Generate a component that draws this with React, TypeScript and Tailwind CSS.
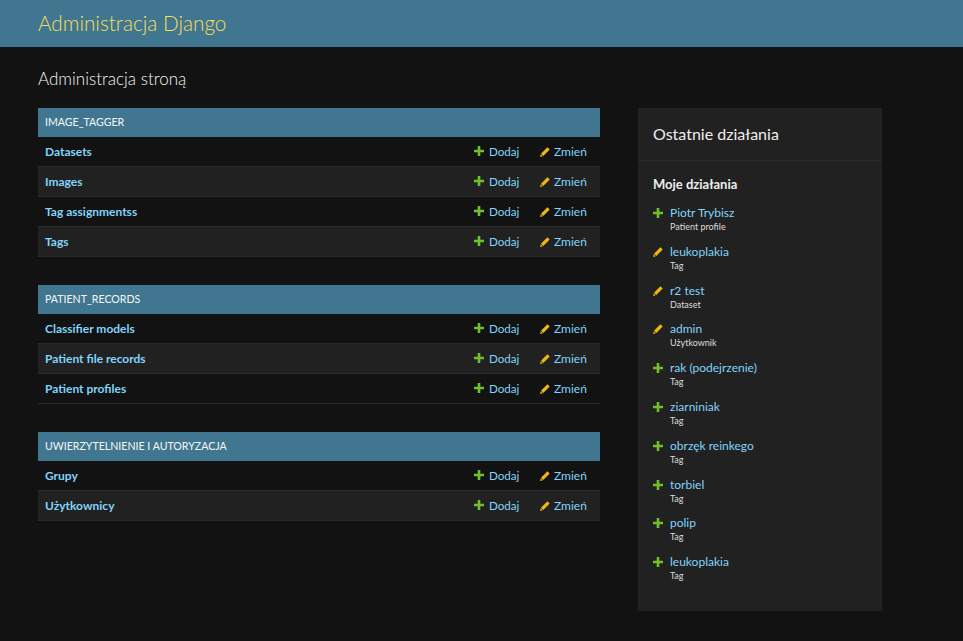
import React from "react";

const font = { fontFamily: '"Segoe UI", Lato, "Noto Sans", sans-serif' };

function Plus({ className = "" }: { className?: string }) {
  return (
    <svg viewBox="0 0 10 10" className={className} width="10" height="10">
      <path d="M3.7 0h2.6v3.7H10v2.6H6.3V10H3.7V6.3H0V3.7h3.7z" fill="#70bf2b" />
    </svg>
  );
}

function Pencil({ className = "" }: { className?: string }) {
  return (
    <svg viewBox="0 0 10 10" className={className} width="10" height="10">
      <path d="M7.4 0.3L9.7 2.6L3.3 9L1 6.7Z" fill="#efb80b" />
      <path d="M0.7 7.2L2.8 9.3L0.1 9.9Z" fill="#efb80b" />
    </svg>
  );
}

type Module = { title: string; rows: string[] };

const modules: Module[] = [
  { title: "Image_tagger", rows: ["Datasets", "Images", "Tag assignmentss", "Tags"] },
  { title: "Patient_records", rows: ["Classifier models", "Patient file records", "Patient profiles"] },
  { title: "Uwierzytelnienie i autoryzacja", rows: ["Grupy", "Użytkownicy"] },
];

const actions: { kind: "add" | "edit"; name: string; type: string }[] = [
  { kind: "add", name: "Piotr Trybisz", type: "Patient profile" },
  { kind: "edit", name: "leukoplakia", type: "Tag" },
  { kind: "edit", name: "r2 test", type: "Dataset" },
  { kind: "edit", name: "admin", type: "Użytkownik" },
  { kind: "add", name: "rak (podejrzenie)", type: "Tag" },
  { kind: "add", name: "ziarniniak", type: "Tag" },
  { kind: "add", name: "obrzęk reinkego", type: "Tag" },
  { kind: "add", name: "torbiel", type: "Tag" },
  { kind: "add", name: "polip", type: "Tag" },
  { kind: "add", name: "leukoplakia", type: "Tag" },
];

export default function App() {
  return (
    <div className="min-h-[641px] bg-[#121212] text-[#eeeeee]" style={font}>
      <header className="h-[47px] bg-[#417690] px-[38px] flex items-center">
        <span className="text-[20.7px] font-light leading-none text-[#f5dd5d]">Administracja Django</span>
      </header>
      <div className="px-[38px]">
        <h1 className="text-[17px] font-light text-[#f5f5f5] pt-[21px] h-[61px] leading-[22px]">Administracja stroną</h1>
        <div className="flex gap-[38px] items-start">
          <div className="w-[562px] flex flex-col gap-[28px]">
            {modules.map((m) => (
              <div key={m.title}>
                <div className="h-[29px] bg-[#417690] px-[7px] flex items-center text-[10.6px] uppercase text-[#f7f7f7]">
                  {m.title}
                </div>
                {m.rows.map((r, i) => (
                  <div
                    key={r}
                    className={`h-[30px] flex items-center pl-[7px] pr-[5px] border-b border-[#2a2a2a] ${i % 2 === 1 ? "bg-[#212121]" : "bg-[#121212]"}`}
                  >
                    <span className="flex-1 text-[12px] font-bold text-[#81d4fa]">{r}</span>
                    <span className="flex items-center gap-[5px] text-[11.6px] text-[#81d4fa] w-[66px]">
                      <Plus />
                      Dodaj
                    </span>
                    <span className="flex items-center gap-[4px] text-[12px] text-[#81d4fa] w-[55px]">
                      <Pencil />
                      Zmień
                    </span>
                  </div>
                ))}
              </div>
            ))}
          </div>
          <div className="w-[244px] h-[503px] bg-[#212121]">
            <div className="h-[53px] flex items-center px-[15px] border-b border-[#2a2a2a] text-[16px] text-[#eeeeee]">
              Ostatnie działania
            </div>
            <div className="px-[15px] pt-[14px]">
              <div className="text-[13px] font-bold text-[#eeeeee] h-[30px] leading-[18px]">Moje działania</div>
              <div className="flex flex-col">
                {actions.map((a, i) => (
                  <div key={i} className="flex h-[38.8px]">
                    <div className="w-[17px] pt-[3px]">{a.kind === "add" ? <Plus /> : <Pencil />}</div>
                    <div className="flex flex-col">
                      <span className="text-[12px] leading-[16px] text-[#81d4fa]">{a.name}</span>
                      <span className="text-[9px] leading-[11px] text-[#dddddd]">{a.type}</span>
                    </div>
                  </div>
                ))}
              </div>
            </div>
          </div>
        </div>
      </div>
    </div>
  );
}
